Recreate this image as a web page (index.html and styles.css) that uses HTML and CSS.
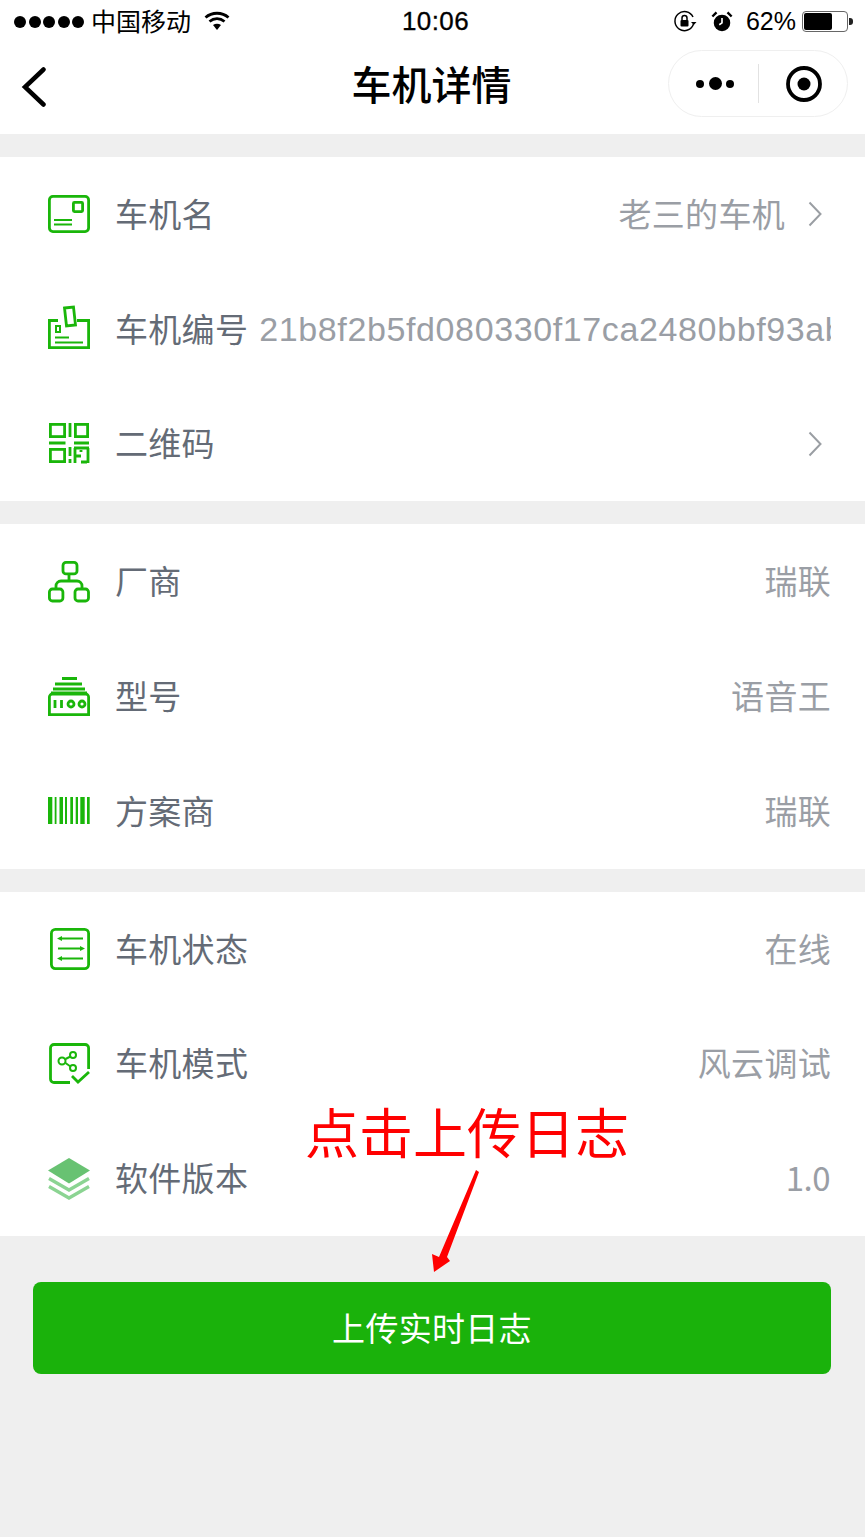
FILE: index.html
```html
<!DOCTYPE html>
<html lang="zh">
<head>
<meta charset="utf-8">
<title>车机详情</title>
<link rel="stylesheet" href="styles.css">
</head>
<body>
<div class="page">
  <header class="top">
    <div class="status">
      <div class="status-left">
        <span class="dots"><i></i><i></i><i></i><i></i><i></i></span>
        <span class="carrier">中国移动</span>
        <svg class="wifi" width="26" height="20" viewBox="0 0 26 20"><path d="M1.500 6.500C8 .8 18 .8 24.500 6.500" fill="none" stroke="#000" stroke-width="2.800"/><path d="M5.500 10.500c4.500-3.800 10.500-3.800 15 0" fill="none" stroke="#000" stroke-width="2.800"/><path d="M9 14c2.500-1.800 5.500-1.800 8 0l-4 5z" fill="#000"/></svg>
      </div>
      <div class="time">10:06</div>
      <div class="status-right">
        <svg width="24" height="24" viewBox="0 0 24 24"><path d="M20.500 14A9.500 9.500 0 1 1 20 7" fill="none" stroke="#000" stroke-width="1.500"/><path d="M18 12h5.500l-2.700 3z" fill="#000"/><rect x="7.500" y="10" width="8" height="6.500" rx="1" fill="#000"/><path d="M9 10V8a2.500 2.500 0 0 1 5 0v2" fill="none" stroke="#000" stroke-width="1.500"/></svg>
        <svg width="22" height="22" viewBox="0 0 24 24"><circle cx="12" cy="13" r="9" fill="#000"/><path d="M12 7.500V13l-3 2" fill="none" stroke="#fff" stroke-width="1.800"/><path d="M1.500 6L6 1.500M22.500 6L18 1.500" stroke="#000" stroke-width="2.600"/></svg>
        <span class="pct">62%</span>
        <span class="battery"><span class="battery-level"></span></span>
      </div>
    </div>
    <div class="nav">
      <svg class="back" width="26" height="40" viewBox="0 0 26 40"><path d="M22.500 2.500L4 20l18.500 17.500" fill="none" stroke="#000" stroke-width="4.500" stroke-linecap="round"/></svg>
      <h1 class="title">车机详情</h1>
      <div class="capsule">
        <span class="more"><i></i><b></b><i></i></span>
        <span class="sep"></span>
        <svg width="38" height="38" viewBox="0 0 38 38"><circle cx="19" cy="19" r="16" fill="none" stroke="#000" stroke-width="3.800"/><circle cx="19" cy="19" r="6.500" fill="#000"/></svg>
      </div>
    </div>
  </header>

  <main>
    <section class="group">
      <div class="row">
        <svg class="icon" viewBox="0 0 42 42"><rect x="1.400" y="3.400" width="39.200" height="35.200" rx="3.500" class="s"/><rect x="25.400" y="9.400" width="9.200" height="9.200" rx="1" class="s"/><path d="M6 27h18M6 31.500h18" class="s thin"/></svg>
        <span class="label">车机名</span>
        <span class="value">老三的车机</span>
        <svg class="chev" width="14" height="26" viewBox="0 0 14 26"><path d="M1.500 1.500L12.500 13 1.500 24.500" fill="none" stroke="#9a9ea3" stroke-width="2"/></svg>
      </div>
      <div class="row">
        <svg class="icon" viewBox="0 0 42 42"><path d="M10 12.500H1.400v27.100h39.200V12.500H29" class="s"/><path d="M16.500 0l9-1 2 18-9 1z" class="s"/><path d="M8 18h4v6H8zM7 29.500h14M7 34.500h28" class="s thin"/></svg>
        <span class="label">车机编号</span>
        <span class="value long">21b8f2b5fd080330f17ca2480bbf93abc</span>
      </div>
      <div class="row">
        <svg class="icon" viewBox="0 0 42 42"><rect x="2.400" y="1.400" width="14.200" height="12.200" class="s"/><path d="M22 0v14" class="s"/><rect x="27.400" y="1.400" width="12.200" height="12.200" class="s"/><path d="M1 20h16.500M26 20h15M26 25h15" class="s"/><rect x="2.400" y="26.400" width="14.200" height="12.200" class="s"/><path d="M22 24v9M22 36v4M27 25v15M33 33h-5M40 25v15M33 27v2M33 39h6" class="s"/></svg>
        <span class="label">二维码</span>
        <span class="value"></span>
        <svg class="chev" width="14" height="26" viewBox="0 0 14 26"><path d="M1.500 1.500L12.500 13 1.500 24.500" fill="none" stroke="#9a9ea3" stroke-width="2"/></svg>
      </div>
    </section>

    <section class="group">
      <div class="row">
        <svg class="icon" viewBox="0 0 42 42"><rect x="15" y="1.400" width="14" height="11.500" rx="3" class="s"/><path d="M21 13v7M8 28v-3a5 5 0 0 1 5-5h16a5 5 0 0 1 5 5v3" class="s"/><rect x="1.400" y="28" width="13.500" height="12" rx="3" class="s"/><rect x="27" y="28" width="13.500" height="12" rx="3" class="s"/></svg>
        <span class="label">厂商</span>
        <span class="value">瑞联</span>
      </div>
      <div class="row">
        <svg class="icon" viewBox="0 0 42 42"><path d="M14 2.500h15M7 8h27M5 13h32M3 17h36" class="s"/><path d="M1.400 21a3 3 0 0 1 3-3h33.200a3 3 0 0 1 3 3v17.600H1.400z" class="s"/><path d="M7 24v8M13.500 24v8" class="s"/><circle cx="23" cy="28" r="3" class="s"/><circle cx="34" cy="28" r="3" class="s"/></svg>
        <span class="label">型号</span>
        <span class="value">语音王</span>
      </div>
      <div class="row">
        <svg class="icon" viewBox="0 0 42 42"><path d="M0 7h4.300v27H0zM6.700 7h1.800v27H6.700zM11.500 7H15v27h-3.500zM17 7h2v27h-2zM22.300 7H25v27h-2.700zM27.700 7H30v27h-2.300zM32.300 7h4.400v27h-4.400zM39 7h2.700v27H39z" fill="#1ab60a"/></svg>
        <span class="label">方案商</span>
        <span class="value">瑞联</span>
      </div>
    </section>

    <section class="group">
      <div class="row">
        <svg class="icon" viewBox="0 0 42 42"><rect x="3.400" y="1.400" width="37.200" height="39.200" rx="4" class="s"/><path d="M12 10.500h23M10 20.500h24M12 30.500h23" class="s thin"/><path d="M9 10.500l5-2.500v5zM37 20.500l-5-2.500v5zM9 30.500l5-2.500v5z" fill="#1ab60a"/></svg>
        <span class="label">车机状态</span>
        <span class="value">在线</span>
      </div>
      <div class="row">
        <svg class="icon" viewBox="0 0 42 42"><path d="M40.600 26V5a3.500 3.500 0 0 0-3.500-3.500H6A3.500 3.500 0 0 0 2.500 5v31A3.500 3.500 0 0 0 6 39.500h16" class="s"/><circle cx="14" cy="18" r="3.500" class="s thin"/><circle cx="25" cy="12" r="3" class="s thin"/><circle cx="25" cy="25" r="3" class="s thin"/><path d="M17.500 16l5-2.500M17.500 20l5 3.500" class="s thin"/><path d="M24 33l6 6 11-10" class="s"/></svg>
        <span class="label">车机模式</span>
        <span class="value">风云调试</span>
      </div>
      <div class="row">
        <svg class="icon" viewBox="0 0 42 42"><path d="M21 0L42 12.500 21 25.500 0 12.500z" fill="#68c272"/><path d="M1 20.500l20 11.500 20-11.500M1 28.500l20 11.500 20-11.500" fill="none" stroke="#8bd492" stroke-width="3.300"/></svg>
        <span class="label">软件版本</span>
        <span class="value num">1.0</span>
      </div>
    </section>

    <div class="action">
      <button class="upload">上传实时日志</button>
    </div>
  </main>

  <div class="note">点击上传日志</div>
  <svg class="arrow" width="50" height="106" viewBox="0 0 50 106"><path d="M45 1l3 2-32 85 3 4L3 103 1 85l7 3z" fill="#f00"/></svg>
</div>
</body>
</html>
```
FILE: styles.css
```css
* { box-sizing: border-box; }
html, body { margin: 0; padding: 0; }
body {
  width: 865px;
  height: 1537px;
  background: #efefef;
  font-family: "Liberation Sans", "Noto Sans CJK SC", sans-serif;
  overflow: hidden;
}
.page { position: relative; width: 865px; height: 1537px; }
.top { background: #fff; height: 134px; padding-top: 1px; }
.status {
  height: 41px;
  display: flex;
  align-items: center;
  justify-content: space-between;
  position: relative;
  padding: 0 17px 0 14px;
}
.status-left, .status-right { display: flex; align-items: center; }
.dots { display: flex; gap: 2.500px; margin-right: 7px; }
.dots i { width: 12px; height: 12px; border-radius: 50%; background: #000; }
.carrier { font-size: 25px; line-height: 30px; font-family: "Noto Sans CJK SC", sans-serif; margin-bottom: 3px; }
.wifi { margin-left: 13px; margin-bottom: 2px; }
.time {
  position: absolute;
  left: 6px;
  right: 0;
  text-align: center;
  font-size: 26px;
  line-height: 41px;
  letter-spacing: .4px;
  -webkit-text-stroke: .3px #000;
}
.status-right { gap: 14px; }
.pct { font-size: 25px; margin-left: -1px; margin-right: -8px; }
.battery {
  width: 46px;
  height: 21px;
  border: 1px solid #666;
  border-radius: 4px;
  padding: 1px;
  position: relative;
  display: block;
}
.battery::after {
  content: "";
  position: absolute;
  right: -6px;
  top: 6px;
  width: 4px;
  height: 7px;
  background: #222;
  border-radius: 0 3px 3px 0;
}
.battery-level { display: block; width: 28px; height: 100%; background: #000; border-radius: 2px; }
.nav { height: 92px; display: flex; align-items: center; position: relative; padding: 0 17px 0 21px; justify-content: space-between; }
.back { margin-top: -2px; }
.title {
  position: absolute;
  left: 0;
  right: 2px;
  top: 16px;
  margin: 0;
  text-align: center;
  font: 500 40px/50px "Noto Sans CJK SC", sans-serif;
  color: #000;
}
.capsule {
  width: 180px;
  height: 67px;
  margin-top: -9px;
  border: 1px solid #efefef;
  border-radius: 34px;
  display: flex;
  align-items: center;
  padding-left: 27px;
  position: relative;
}
.more { display: flex; align-items: center; gap: 4.500px; width: 62px; }
.more i { width: 8px; height: 8px; border-radius: 50%; background: #000; }
.more b { width: 13px; height: 13px; border-radius: 50%; background: #000; }
.sep { width: 1px; height: 39px; background: #e2e2e2; }
.capsule svg { margin-left: 26px; }
main { padding-top: 23px; }
.group { background: #fff; margin-bottom: 23px; }
.group:nth-of-type(3) { margin-bottom: 0; }
.row {
  height: 114.800px;
  display: flex;
  align-items: center;
  padding: 0 34px 0 48px;
  font-family: "Noto Sans CJK SC", sans-serif;
  font-size: 33px;
  letter-spacing: .3px;
}
.icon { width: 42px; height: 42px; flex: none; margin-right: 26px; overflow: visible; }
.s { fill: none; stroke: #1ab60a; stroke-width: 2.800; }
.s.thin { stroke-width: 2; }
.label { color: #646b76; white-space: nowrap; flex: none; margin: 0 0 3px -1px; }
.value { flex: 1; text-align: right; color: #9a9ea5; white-space: nowrap; overflow: hidden; min-width: 0; margin-bottom: 3px; }
.value.long {
  text-align: left;
  margin: 0 0 0 11px;
  font-family: "Liberation Sans", sans-serif;
  font-size: 34px;
  letter-spacing: .62px;
}
.value.num { letter-spacing: -.5px; margin-right: 1px; }
.chev { flex: none; margin: 0 9px 0 23px; }
.action { padding: 46px 34px 0 33px; }
.upload {
  display: block;
  width: 100%;
  height: 92px;
  border: 0;
  border-radius: 8px;
  background: #1ab20b;
  color: #fff;
  padding: 0 0 3px;
  font: 33px "Noto Sans CJK SC", sans-serif;
  letter-spacing: .3px;
}
.note {
  position: absolute;
  left: 305px;
  top: 1095px;
  font: 54px/72px "Noto Sans CJK SC", sans-serif;
  color: #f00;
  white-space: nowrap;
}
.arrow { position: absolute; left: 431px; top: 1169px; }
```
